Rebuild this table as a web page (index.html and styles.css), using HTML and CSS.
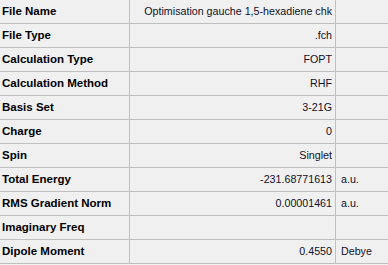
FILE: index.html
```html
<!DOCTYPE html>
<html>
<head>
<meta charset="utf-8">
<link rel="stylesheet" href="styles.css">
</head>
<body>
<div class="grid">
  <div class="cell label">File Name</div><div class="cell value">Optimisation gauche 1,5-hexadiene chk</div><div class="cell unit"></div>
  <div class="cell label">File Type</div><div class="cell value">.fch</div><div class="cell unit"></div>
  <div class="cell label">Calculation Type</div><div class="cell value">FOPT</div><div class="cell unit"></div>
  <div class="cell label">Calculation Method</div><div class="cell value">RHF</div><div class="cell unit"></div>
  <div class="cell label">Basis Set</div><div class="cell value">3-21G</div><div class="cell unit"></div>
  <div class="cell label">Charge</div><div class="cell value">0</div><div class="cell unit"></div>
  <div class="cell label">Spin</div><div class="cell value">Singlet</div><div class="cell unit"></div>
  <div class="cell label">Total Energy</div><div class="cell value">-231.68771613</div><div class="cell unit">a.u.</div>
  <div class="cell label">RMS Gradient Norm</div><div class="cell value">0.00001461</div><div class="cell unit">a.u.</div>
  <div class="cell label">Imaginary Freq</div><div class="cell value"></div><div class="cell unit"></div>
  <div class="cell label">Dipole Moment</div><div class="cell value">0.4550</div><div class="cell unit">Debye</div>
</div>
</body>
</html>
```

FILE: styles.css
```css
html, body {
  margin: 0;
  padding: 0;
  background: #f0f0f0;
}
body {
  width: 388px;
  height: 265px;
  overflow: hidden;
  font-family: "Liberation Sans", Arial, sans-serif;
  font-size: 10.7px;
  color: #000;
}
.grid {
  display: grid;
  grid-template-columns: 130px 206px 52px;
  grid-auto-rows: 24px;
}
.cell {
  box-sizing: border-box;
  border-bottom: 1px solid #c0c0c0;
  line-height: 23px;
  white-space: nowrap;
  overflow: hidden;
}
.label {
  border-right: 1px solid #c0c0c0;
  font-weight: bold;
  font-size: 11.5px;
  padding-left: 2px;
}
.value {
  border-right: 1px solid #c0c0c0;
  text-align: right;
  padding-right: 3px;
  color: #10102a;
}
.unit {
  padding-left: 5px;
  color: #10102a;
}
```
